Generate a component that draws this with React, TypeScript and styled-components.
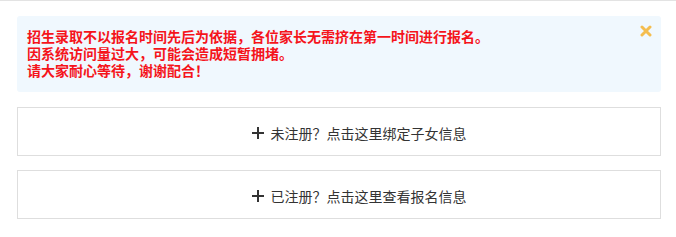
import React from "react";
import styled, { createGlobalStyle } from "styled-components";

const Global = createGlobalStyle`
  html, body { margin: 0; padding: 0; background: #fff; }
  body { font-family: "Liberation Sans", "Noto Sans CJK SC", sans-serif; }
`;

const Page = styled.div`
  border-top: 1px solid #e3e3e3;
  padding: 15px 15px 0 17px;
  width: 644px;
`;

const Alert = styled.div`
  position: relative;
  box-sizing: border-box;
  height: 76px;
  background: #f0f8fe;
  border-radius: 3px;
  padding: 13px 30px 0 10px;
  color: #f5141b;
  font-weight: bold;
  font-size: 14px;
  line-height: 17px;
`;

const Line = styled.div`
  height: 17px;
  white-space: nowrap;
`;

const Close = styled.span`
  position: absolute;
  top: 9px;
  right: 9px;
  width: 12px;
  height: 12px;
  display: flex;
`;

const Actions = styled.div`
  display: flex;
  flex-direction: column;
  gap: 14px;
  margin-top: 15px;
`;

const ActionBox = styled.div`
  box-sizing: border-box;
  height: 49px;
  border: 1px solid #dedede;
  background: #fff;
  display: flex;
  align-items: center;
  justify-content: center;
  padding: 3px 0 0 40px;
  color: #333;
  font-size: 14px;
  gap: 7px;
`;

const PlusIcon = () => (
  <svg width="12" height="12" viewBox="0 0 12 12">
    <rect x="5" y="0" width="2" height="12" fill="#333" />
    <rect x="0" y="5" width="12" height="2" fill="#333" />
  </svg>
);

const XIcon = () => (
  <svg width="12" height="12" viewBox="0 0 12 12">
    <path d="M2 2 L10 10 M10 2 L2 10" stroke="#f4bd4f" strokeWidth="3" strokeLinecap="round" />
  </svg>
);

export default function App() {
  return (
    <>
      <Global />
      <Page>
        <Alert>
          <Line>招生录取不以报名时间先后为依据，各位家长无需挤在第一时间进行报名。</Line>
          <Line>因系统访问量过大，可能会造成短暂拥堵。</Line>
          <Line>请大家耐心等待，谢谢配合！</Line>
          <Close>
            <XIcon />
          </Close>
        </Alert>
        <Actions>
          <ActionBox>
            <PlusIcon />
            <span>未注册？点击这里绑定子女信息</span>
          </ActionBox>
          <ActionBox>
            <PlusIcon />
            <span>已注册？点击这里查看报名信息</span>
          </ActionBox>
        </Actions>
      </Page>
    </>
  );
}
